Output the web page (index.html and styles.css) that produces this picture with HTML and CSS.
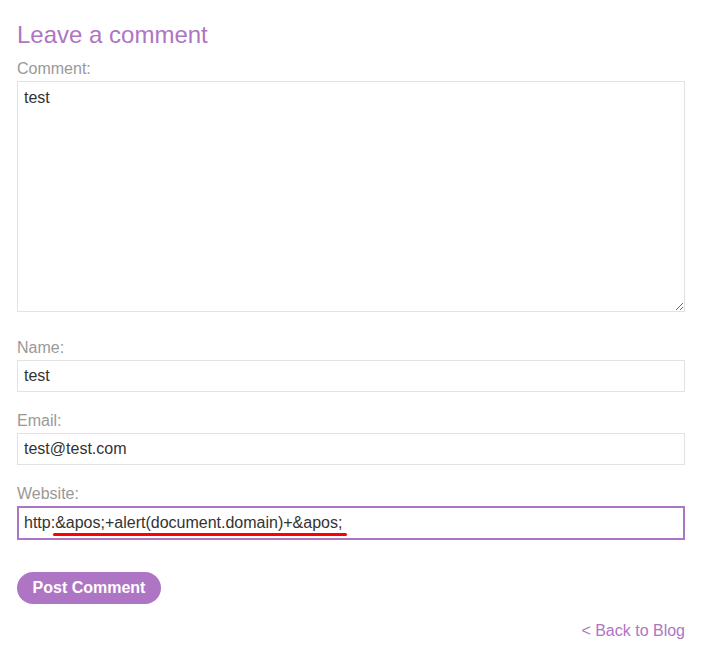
FILE: index.html
```html
<!DOCTYPE html>
<html>
<head>
<meta charset="utf-8">
<link rel="stylesheet" href="styles.css">
</head>
<body>
<section class="comment-form">
  <h2 class="title">Leave a comment</h2>
  <form class="form">
    <label class="label">Comment:</label>
    <textarea class="field textarea">test</textarea>
    <label class="label">Name:</label>
    <input class="field" type="text" value="test">
    <label class="label">Email:</label>
    <input class="field" type="text" value="test@test.com">
    <label class="label">Website:</label>
    <div class="annotated">
      <input class="field focused" type="text" value="http:&amp;apos;+alert(document.domain)+&amp;apos;">
      <span class="red-mark"></span>
    </div>
    <button class="btn" type="button">Post Comment</button>
  </form>
  <div class="back"><a href="#" class="back-link">&lt; Back to Blog</a></div>
</section>
</body>
</html>
```
FILE: styles.css
```css
html, body {
  margin: 0;
  padding: 0;
  background: #fff;
}
body {
  font-family: "Liberation Sans", Arial, sans-serif;
  color: #333;
}
.comment-form {
  width: 668px;
  padding: 20px 0 0 17px;
}
.title {
  margin: 0 0 10px;
  font-size: 24px;
  line-height: 29px;
  font-weight: normal;
  color: #ae75c5;
}
.form {
  display: flex;
  flex-direction: column;
}
.label {
  font-size: 16px;
  line-height: 20px;
  color: #999;
  margin-bottom: 2px;
}
.field {
  display: block;
  box-sizing: border-box;
  width: 668px;
  height: 32px;
  margin: 0 0 19px;
  padding: 0 6px;
  border: 1px solid #e2e2e2;
  font-family: "Liberation Sans", Arial, sans-serif;
  font-size: 16px;
  color: #333;
  background: #fff;
  outline: none;
}
.textarea {
  height: 231px;
  padding: 7px 6px;
  resize: vertical;
  margin-bottom: 26px;
}
.annotated {
  position: relative;
}
.focused {
  height: 34px;
  border: 2px solid #ae75c5;
  padding: 0 5px;
  margin-bottom: 32px;
}
.red-mark {
  position: absolute;
  left: 36px;
  top: 27px;
  width: 294px;
  height: 3px;
  border-radius: 2px;
  background: #f00;
}
.btn {
  align-self: flex-start;
  width: 144px;
  height: 32px;
  padding: 0;
  border: none;
  border-radius: 16px;
  background: #ae75c5;
  color: #fff;
  font-family: "Liberation Sans", Arial, sans-serif;
  font-size: 16px;
  font-weight: bold;
}
.back {
  margin-top: 17px;
  text-align: right;
  font-size: 16px;
  line-height: 20px;
}
.back-link {
  color: #ae75c5;
  text-decoration: none;
}
```
